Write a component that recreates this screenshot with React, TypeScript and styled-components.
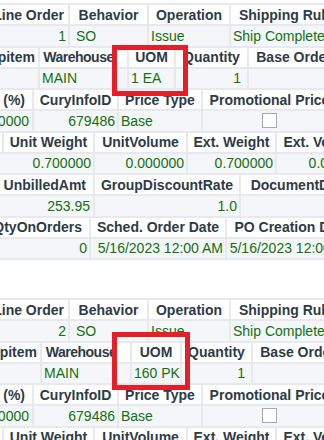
import React from 'react';
import styled, { createGlobalStyle } from 'styled-components';

const Global = createGlobalStyle`
  html, body { margin: 0; padding: 0; background: #ffffff; }
  body { font-family: "Liberation Sans", Arial, sans-serif; }
`;

const Page = styled.div`
  position: relative;
  width: 324px;
  height: 440px;
  overflow: hidden;
  background: #ffffff;
  padding-top: 3px;
  box-sizing: border-box;
`;

const Records = styled.div`
  display: flex;
  flex-direction: column;
  gap: 38px;
`;

const Record = styled.div`
  display: flex;
  flex-direction: column;
  gap: 2px;
  padding: 2px 0;
  background: #e7e9ee;
  width: max-content;
`;

const Table = styled.div<{ $cols: string }>`
  display: grid;
  grid-template-columns: ${(p) => p.$cols};
  grid-template-rows: 19px 19.5px;
  gap: 2px;
`;

const Head = styled.div<{ $clip?: number; $shift?: number; $tight?: boolean }>`
  display: flex;
  align-items: center;
  justify-content: ${(p) => (p.$clip !== undefined ? 'flex-end' : 'center')};
  padding-right: ${(p) => p.$clip ?? p.$shift ?? 0}px;
  background: #ffffff;
  color: #2c3b47;
  font-size: 14px;
  font-weight: bold;
  letter-spacing: ${(p) => (p.$tight ? '-0.5px' : 'normal')};
  white-space: nowrap;
  overflow: hidden;
`;

const Val = styled.div<{ $align?: 'left' | 'right' | 'center'; $pad?: number }>`
  display: flex;
  align-items: center;
  justify-content: ${(p) =>
    p.$align === 'right' ? 'flex-end' : p.$align === 'center' ? 'center' : 'flex-start'};
  padding: 0 ${(p) => p.$pad ?? 2}px;
  background: #f4f6fa;
  color: #13700f;
  font-size: 14px;
  white-space: nowrap;
  overflow: hidden;
`;

const Check = styled.span`
  display: block;
  width: 15px;
  height: 15px;
  box-sizing: border-box;
  border: 1px solid #a9a5b8;
  background: #ffffff;
`;

const Mark = styled.div<{ $x: number; $y: number; $w: number; $h: number }>`
  position: absolute;
  left: ${(p) => p.$x}px;
  top: ${(p) => p.$y}px;
  width: ${(p) => p.$w}px;
  height: ${(p) => p.$h}px;
  border: 5px solid #e61e28;
  box-sizing: border-box;
  pointer-events: none;
`;

type H = string | { t: string; clip?: number; shift?: number; tight?: boolean };
type V = string | { t?: string; a?: 'left' | 'right' | 'center'; pad?: number; check?: boolean };
type T = { cols: string; heads: H[]; vals: V[] };

const SheetTable: React.FC<T> = ({ cols, heads, vals }) => (
  <Table $cols={cols}>
    {heads.map((h, i) =>
      typeof h === 'string' ? (
        <Head key={'h' + i}>{h}</Head>
      ) : (
        <Head key={'h' + i} $clip={h.clip} $shift={h.shift} $tight={h.tight}>
          {h.t}
        </Head>
      )
    )}
    {vals.map((v, i) =>
      typeof v === 'string' ? (
        <Val key={'v' + i}>{v}</Val>
      ) : (
        <Val key={'v' + i} $align={v.a} $pad={v.pad}>
          {v.check ? <Check /> : v.t}
        </Val>
      )
    )}
  </Table>
);

const makeRecord = (line: string, uom: string, bCols: string): T[] => [
  {
    cols: '68px 77px 80px 110px',
    heads: [{ t: 'Line Order', clip: 4 }, 'Behavior', 'Operation', 'Shipping Rule'],
    vals: [{ t: line, a: 'right' }, { t: 'SO', pad: 6 }, 'Issue', 'Ship Complete'],
  },
  {
    cols: bCols,
    heads: [
      { t: 'Shipitem', clip: 3 },
      { t: 'Warehouse', shift: 10, tight: true },
      'UOM',
      'Quantity',
      'Base Order',
    ],
    vals: ['', 'MAIN', uom, { t: '1', a: 'right', pad: 6 }, ''],
  },
  {
    cols: '32px 83px 82px 133px',
    heads: [{ t: 'Discount (%)', clip: 7 }, 'CuryInfoID', 'Price Type', 'Promotional Price'],
    vals: [{ t: '0.000000', a: 'right', pad: 3 }, { t: '679486', a: 'right' }, 'Base', { a: 'center', check: true }],
  },
  {
    cols: '2px 89px 91px 87px 92px',
    heads: ['', 'Unit Weight', 'UnitVolume', 'Ext. Weight', 'Ext. Volume'],
    vals: [
      '',
      { t: '0.700000', a: 'right' },
      { t: '0.000000', a: 'right' },
      { t: '0.700000', a: 'right' },
      { t: '0.000000', a: 'right' },
    ],
  },
  {
    cols: '93px 144px 178px',
    heads: [{ t: 'UnbilledAmt', clip: 7 }, 'GroupDiscountRate', 'DocumentDiscountRate'],
    vals: [{ t: '253.95', a: 'right', pad: 3 }, { t: '1.0', a: 'right' }, { t: '1.0', a: 'right' }],
  },
  {
    cols: '89px 134px 130px',
    heads: [{ t: 'QtyOnOrders', clip: 7 }, 'Sched. Order Date', 'PO Creation Date'],
    vals: [
      { t: '0', a: 'right' },
      { t: '5/16/2023 12:00 AM', a: 'right' },
      { t: '5/16/2023 12:00 AM', a: 'right' },
    ],
  },
];

const records: T[][] = [
  makeRecord('1', '1 EA', '38px 87px 45px 71px 90px'),
  makeRecord('2', '160 PK', '40px 88px 48px 69px 90px'),
];

export default function App() {
  return (
    <>
      <Global />
      <Page>
        <Records>
          {records.map((rec, r) => (
            <Record key={r}>
              {rec.map((t, i) => (
                <SheetTable key={i} {...t} />
              ))}
            </Record>
          ))}
        </Records>
        <Mark $x={112} $y={45} $w={76} $h={51} />
        <Mark $x={112} $y={332} $w={78} $h={58} />
      </Page>
    </>
  );
}
